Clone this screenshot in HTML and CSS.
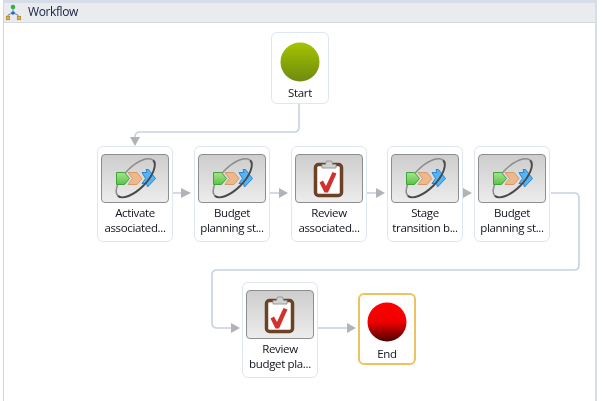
FILE: index.html
```html
<!DOCTYPE html>
<html lang="en">
<head>
<meta charset="utf-8">
<title>Workflow</title>
<link rel="stylesheet" href="styles.css">
</head>
<body>
<svg class="defs" width="0" height="0" aria-hidden="true">
  <defs>
    <linearGradient id="startFill" x1="0" y1="0" x2="0" y2="1">
      <stop offset="0" stop-color="#a4c400"/>
      <stop offset="1" stop-color="#6f8a10"/>
    </linearGradient>
    <linearGradient id="endFill" x1="0" y1="0" x2="0" y2="1">
      <stop offset="0" stop-color="#ff0000"/>
      <stop offset="0.5" stop-color="#f00000"/>
      <stop offset="1" stop-color="#4a0000"/>
    </linearGradient>
    <linearGradient id="greenFill" x1="0" y1="0" x2="0" y2="1">
      <stop offset="0" stop-color="#a8e58a"/>
      <stop offset="1" stop-color="#5cc24a"/>
    </linearGradient>
    <symbol id="activity" viewBox="0 0 68 49">
      <g transform="translate(34.500 24) rotate(-45)">
        <path d="M-25 0A25 11 0 0 1 25 0" fill="none" stroke="#8c8c8c" stroke-width="1.500"/>
      </g>
      <path d="M15.500 18.500h8l5 6-5 6h-8z" fill="url(#greenFill)" stroke="#3fa53a" stroke-width="1"/>
      <path d="M27 18.500h9l5 6-5 6h-9l4.500-6z" fill="#eeb88c" stroke="#d69a68" stroke-width="1"/>
      <path d="M41 18.500h5l-1-3h2.500l7 9-8 8.500-1-3.500h-4.500l3.500-5z" fill="#55b4f4" stroke="#2684d4" stroke-width="1"/>
      <g transform="translate(34.500 24) rotate(-45)">
        <path d="M25 0A25 11 0 0 1-25 0" fill="none" stroke="#4a4a4a" stroke-width="2"/>
      </g>
    </symbol>
    <symbol id="clipboard" viewBox="0 0 68 49">
      <rect x="20.500" y="10.500" width="26" height="31" rx="3" fill="#fff" stroke="#6b4226" stroke-width="3.500"/>
      <path d="M27 14v-3.500h3.500l1-3.500h5l1 3.500h3.500V14z" fill="#d2d2d2" stroke="#9a9a9a" stroke-width="1"/>
      <path d="M24.500 28.500l3.500-2 3 5.500 6.500-14 4 1.500L33 38.500h-3.500z" fill="#d2322b"/>
    </symbol>
  </defs>
</svg>

<main class="panel">
  <header class="panel-head">
    <svg class="head-icon" width="18" height="18" viewBox="0 0 18 18" aria-hidden="true">
      <path d="M8 4v5M3 13v-2l5-2 5 2v2" fill="none" stroke="#7b8aa0" stroke-width="1"/>
      <circle cx="8" cy="3" r="2.300" fill="#36b04a"/>
      <path d="M5.500 9L8 7l2.500 2L8 11z" fill="#2f68c0"/>
      <rect x="1.300" y="12.300" width="3.400" height="3.400" fill="#e3b23c" stroke="#b0851f" stroke-width="0.700"/>
      <rect x="12.300" y="12.300" width="3.400" height="3.400" fill="#e3b23c" stroke="#b0851f" stroke-width="0.700"/>
    </svg>
    <span class="head-title">Workflow</span>
  </header>

  <section class="canvas">
    <svg class="wires" width="602" height="401" viewBox="0 0 602 401" aria-hidden="true">
      <g class="wire">
        <path d="M299 104V127Q299 132 294 132H140Q135 132 135 137V138"/>
        <path d="M173 193H182"/>
        <path d="M270 193H279"/>
        <path d="M367 193H377"/>
        <path d="M463 193H464"/>
        <path d="M551 193H574Q579 193 579 198V265Q579 270 574 270H217Q212 270 212 275V323Q212 328 217 328H232"/>
        <path d="M318 328H347"/>
      </g>
      <g class="arrow">
        <path d="M130 137H140L135 146z"/>
        <path d="M181 188V198L191 193z"/>
        <path d="M279 188V198L288 193z"/>
        <path d="M376 188V198L385 193z"/>
        <path d="M463 188V198L472 193z"/>
        <path d="M231 323V333L240 328z"/>
        <path d="M347 323V333L356 328z"/>
      </g>
    </svg>

    <div class="node event n-start">
      <svg class="orb" width="40" height="40" viewBox="0 0 40 40" aria-hidden="true"><circle cx="20" cy="20" r="19.500" fill="url(#startFill)"/></svg>
      <span class="label">Start</span>
    </div>

    <div class="node n-a1">
      <span class="tile"><svg width="68" height="49" aria-hidden="true"><use href="#activity"/></svg></span>
      <span class="label">Activate<br>associated...</span>
    </div>
    <div class="node n-a2">
      <span class="tile"><svg width="68" height="49" aria-hidden="true"><use href="#activity"/></svg></span>
      <span class="label">Budget<br>planning st...</span>
    </div>
    <div class="node n-a3">
      <span class="tile"><svg width="68" height="49" aria-hidden="true"><use href="#clipboard"/></svg></span>
      <span class="label">Review<br>associated...</span>
    </div>
    <div class="node n-a4">
      <span class="tile"><svg width="68" height="49" aria-hidden="true"><use href="#activity"/></svg></span>
      <span class="label">Stage<br>transition b...</span>
    </div>
    <div class="node n-a5">
      <span class="tile"><svg width="68" height="49" aria-hidden="true"><use href="#activity"/></svg></span>
      <span class="label">Budget<br>planning st...</span>
    </div>
    <div class="node n-a6">
      <span class="tile"><svg width="68" height="49" aria-hidden="true"><use href="#clipboard"/></svg></span>
      <span class="label">Review<br>budget pla...</span>
    </div>

    <div class="node event selected n-end">
      <svg class="orb" width="40" height="40" viewBox="0 0 40 40" aria-hidden="true"><circle cx="20" cy="20" r="19.500" fill="url(#endFill)"/></svg>
      <span class="label">End</span>
    </div>
  </section>
</main>
</body>
</html>
```

FILE: styles.css
```css
* { box-sizing: border-box; }

html, body {
  margin: 0;
  height: 100%;
  background: #fff;
}

body {
  width: 602px;
  height: 401px;
  overflow: hidden;
  font-family: "Open Sans", "Noto Sans", sans-serif;
  padding-left: 3px;
  padding-right: 5px;
}

.defs { position: absolute; }

.panel {
  height: 100%;
  border-top: 3px solid #d6dde9;
  border-left: 1px solid #d0d8e6;
  border-right: 2px solid #d6dde9;
  display: flex;
  flex-direction: column;
  filter: blur(0.35px);
}

.panel-head {
  flex: none;
  height: 20px;
  display: flex;
  align-items: center;
  gap: 5px;
  padding-left: 1px;
  background: #e9ebef;
  border-bottom: 1px solid #d3d9e5;
}

.head-title {
  font-size: 12px;
  letter-spacing: -0.400px;
  color: #14203f;
  line-height: 16px;
  margin-top: -2px;
}

.canvas {
  position: relative;
  flex: 1;
  background: #fff;
}

.wires {
  position: absolute;
  left: -4px;
  top: -23px;
}

.wire path {
  fill: none;
  stroke: #c6d1e2;
  stroke-width: 1.600;
}

.arrow path { fill: #b3b3b3; }

.node {
  position: absolute;
  width: 76px;
  height: 96px;
  padding: 7px 2px 0;
  display: flex;
  flex-direction: column;
  align-items: center;
  background: #fff;
  border: 1.500px solid #dfe6f1;
  border-radius: 6px;
}

.tile {
  display: block;
  flex: none;
  width: 68px;
  height: 49px;
  background: linear-gradient(#cdcdcd, #ececec);
  border: 1px solid #8e8e8e;
  border-radius: 4px;
  overflow: hidden;
}

.tile svg {
  display: block;
  margin: -1px;
}

.label {
  margin-top: 2px;
  font-size: 11.500px;
  letter-spacing: -0.350px;
  line-height: 15px;
  color: #10131f;
  text-align: center;
  white-space: nowrap;
}

.event {
  width: 58px;
  height: 72px;
  padding-top: 9px;
}

.orb { display: block; flex: none; }

.event .label { margin-top: 3px; }

.selected {
  border: 2px solid #eec25f;
  padding-top: 7px;
}

.selected .label { margin-top: 4px; }

.n-start { left: 267px; top: 9px; }
.n-a1 { left: 93px; top: 123px; }
.n-a2 { left: 190px; top: 123px; }
.n-a3 { left: 287px; top: 123px; }
.n-a4 { left: 383px; top: 123px; }
.n-a5 { left: 470px; top: 123px; }
.n-a6 { left: 238px; top: 259px; }
.n-end { left: 354px; top: 270px; }
```
